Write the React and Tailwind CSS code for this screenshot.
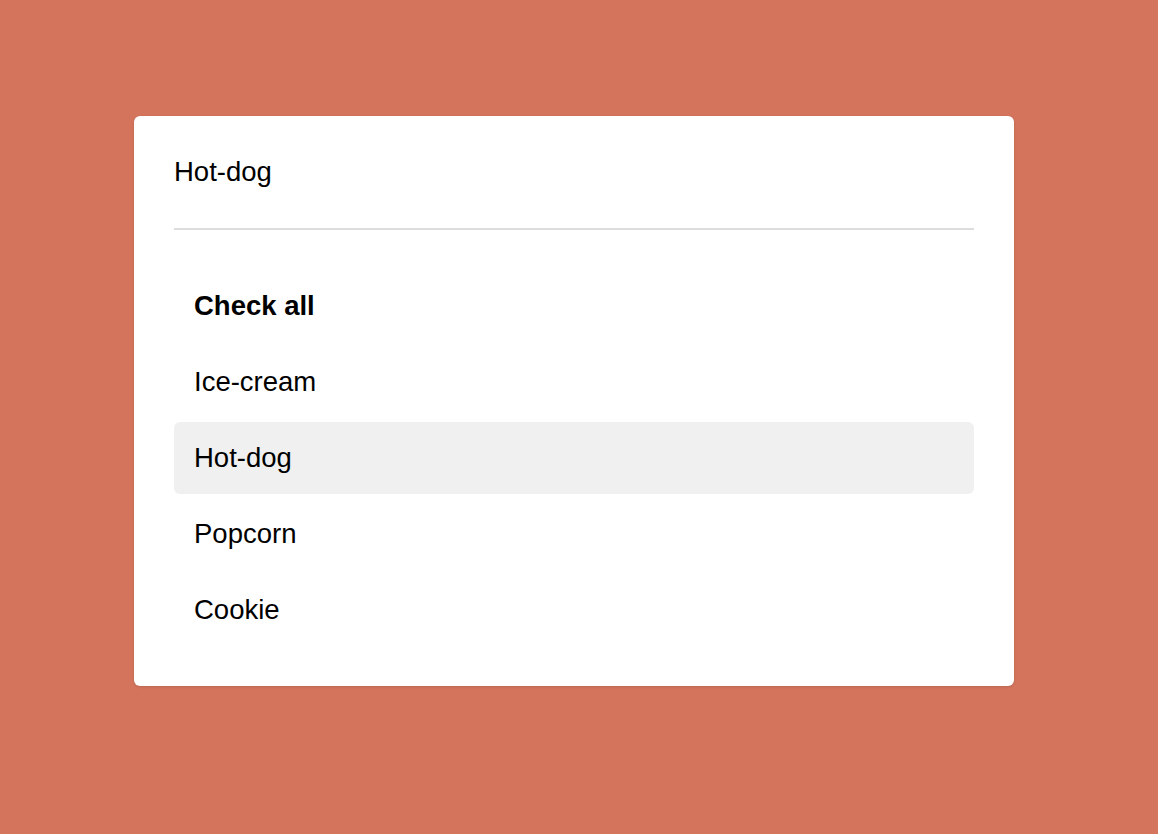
import React, { useState } from 'react';

const items = ['Ice-cream', 'Hot-dog', 'Popcorn', 'Cookie'];

export default function App() {
  const [selected, setSelected] = useState('Hot-dog');

  return (
    <div
      className="min-h-screen w-full bg-[#d4745c] flex pl-[134px] pt-[116px]"
      style={{ fontFamily: "'Liberation Sans', Arial, sans-serif" }}
    >
      <div className="w-[880px] h-[570px] bg-white rounded-[6px] shadow-[0_1px_3px_rgba(0,0,0,0.12)] p-10">
        <div className="h-8 flex items-center text-[27.5px] text-black">{selected}</div>
        <div className="mt-10 h-[2px] bg-[#dddddd]" />

        {/* list */}
        <ul className="mt-10 flex flex-col gap-1">
          <li className="h-[72px] px-5 flex items-center text-[27.5px] font-bold text-black rounded-[6px] cursor-pointer">
            Check all
          </li>
          {items.map((item) => (
            <li
              key={item}
              onClick={() => setSelected(item)}
              className={`h-[72px] px-5 flex items-center text-[27.5px] text-black rounded-[6px] cursor-pointer ${
                item === selected ? 'bg-[#f0f0f0]' : ''
              }`}
            >
              {item}
            </li>
          ))}
        </ul>
      </div>
    </div>
  );
}
